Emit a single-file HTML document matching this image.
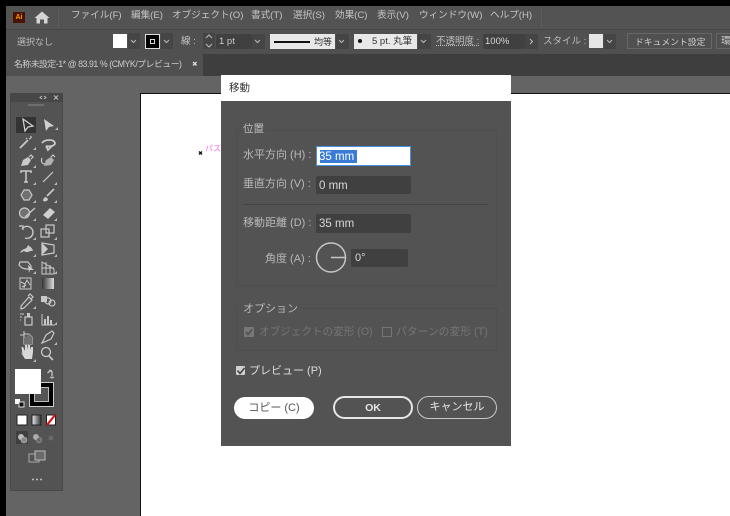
<!DOCTYPE html>
<html><head><meta charset="utf-8">
<style>
html,body{margin:0;padding:0}
body{width:730px;height:516px;overflow:hidden;background:#646464}
#w{position:relative;width:730px;height:516px;overflow:hidden;filter:blur(.35px);font-family:"Liberation Sans","Noto Sans CJK JP",sans-serif;color:#c8c8c8}
.a{position:absolute}
.t{position:absolute;white-space:nowrap;line-height:14px}
.m{font-size:9.6px;color:#c4c4c4;top:9px}
.fld{position:absolute;background:#404040;border-radius:2px;color:#d8d8d8;font-size:11.5px;line-height:21px;box-sizing:border-box;padding-left:3px}
.dd{position:absolute;background:#454545;width:13px;height:18px}
svg{position:absolute;left:0;top:0}
</style></head><body><div id="w">
<div class="a" style="left:0;top:0;width:730px;height:6px;background:#000"></div>
<div class="a" style="left:0;top:0;width:6px;height:516px;background:#000"></div>
<!-- menu bar -->
<div class="a" style="left:6px;top:6px;width:724px;height:23px;background:#535353"></div>
<div class="a" style="left:13px;top:12px;width:12px;height:11px;background:#4a1200;color:#ff9a00;font-size:7px;line-height:11px;text-align:center;font-weight:bold">Ai</div>
<div class="a" style="left:58px;top:8px;width:1px;height:19px;background:#5e5e5e"></div>
<div class="t m" style="left:71px">ファイル(F)</div>
<div class="t m" style="left:131px">編集(E)</div>
<div class="t m" style="left:172px">オブジェクト(O)</div>
<div class="t m" style="left:251px">書式(T)</div>
<div class="t m" style="left:293px">選択(S)</div>
<div class="t m" style="left:335px">効果(C)</div>
<div class="t m" style="left:377px">表示(V)</div>
<div class="t m" style="left:419px">ウィンドウ(W)</div>
<div class="t m" style="left:490px">ヘルプ(H)</div>
<div class="a" style="left:541px;top:8px;width:1px;height:19px;background:#5e5e5e"></div>
<!-- control bar -->
<div class="a" style="left:6px;top:29px;width:724px;height:25px;background:#505050;border-top:1px solid #474747;box-sizing:border-box"></div>
<div class="t" style="left:17px;top:35px;font-size:9px;color:#bdbdbd">選択なし</div>
<div class="a" style="left:113px;top:34px;width:14px;height:14px;background:#fff"></div>
<div class="dd" style="left:128px;top:33px;width:12px;height:16px"></div>
<div class="a" style="left:145px;top:34px;width:15px;height:15px;background:#000;border:1px solid #ddd;box-sizing:border-box"></div>
<div class="a" style="left:150px;top:39px;width:5px;height:5px;border:1px solid #ddd;box-sizing:border-box"></div>
<div class="dd" style="left:161px;top:33px;width:12px;height:16px"></div>
<div class="t" style="left:181px;top:35px;font-size:9.5px;color:#c4c4c4">線 :</div>
<div class="dd" style="left:203px;top:33px;width:12px;height:16px"></div>
<div class="fld" style="left:216px;top:34px;width:36px;height:15px;line-height:16px;font-size:9.5px;color:#ccc;padding-left:3px">1 pt</div>
<div class="dd" style="left:252px;top:34px;width:13px;height:15px"></div>
<div class="a" style="left:270px;top:34px;width:65px;height:15px;background:#e8e8e8"></div>
<div class="a" style="left:274px;top:41px;width:36px;height:2px;background:#111"></div>
<div class="t" style="left:314px;top:35px;font-size:9px;color:#333">均等</div>
<div class="dd" style="left:336px;top:34px;width:13px;height:15px"></div>
<div class="a" style="left:354px;top:34px;width:63px;height:15px;background:#e8e8e8"></div>
<div class="a" style="left:358px;top:39px;width:4px;height:4px;border-radius:50%;background:#111"></div>
<div class="t" style="left:372px;top:35px;font-size:9.5px;color:#333">5 pt. 丸筆</div>
<div class="dd" style="left:418px;top:34px;width:13px;height:15px"></div>
<div class="t" style="left:436px;top:35px;font-size:9.5px;color:#bdbdbd;text-decoration:underline dotted">不透明度 :</div>
<div class="fld" style="left:483px;top:34px;width:42px;height:15px;line-height:16px;font-size:9.5px;padding-left:2px">100%</div>
<div class="dd" style="left:525px;top:34px;width:13px;height:15px"></div>
<div class="t" style="left:543px;top:35px;font-size:9.5px;color:#bdbdbd">スタイル :</div>
<div class="a" style="left:589px;top:34px;width:14px;height:14px;background:#e6e6e6"></div>
<div class="dd" style="left:604px;top:34px;width:12px;height:15px"></div>
<div class="a" style="left:627px;top:33px;width:85px;height:16px;border:1px solid #666;box-sizing:border-box"></div>
<div class="t" style="left:635px;top:35px;font-size:8.8px;color:#cfcfcf">ドキュメント設定</div>
<div class="a" style="left:716px;top:33px;width:20px;height:16px;border:1px solid #666;box-sizing:border-box"></div>
<div class="t" style="left:721px;top:35px;font-size:9.5px;color:#cfcfcf">環</div>
<!-- tabs -->
<div class="a" style="left:6px;top:54px;width:724px;height:22px;background:#3e3e3e"></div>
<div class="a" style="left:6px;top:54px;width:197px;height:22px;background:#505050"></div>
<div class="t" style="left:14px;top:57px;font-size:8.8px;color:#cdcdcd;letter-spacing:-.45px">名称未設定-1* @ 83.91 % (CMYK/プレビュー)</div>
<!-- canvas -->
<div class="a" style="left:6px;top:76px;width:724px;height:440px;background:#646464"></div>
<div class="a" style="left:140px;top:93px;width:590px;height:423px;background:#fff;border-top:1px solid #111;border-left:1px solid #111;box-sizing:border-box"></div>
<div class="t" style="left:205px;top:142px;font-size:8px;color:#f26bf0">パス</div>
<!-- toolbox -->
<div class="a" style="left:10px;top:93px;width:53px;height:398px;background:#535353;border:1px solid #4a4a4a;box-sizing:border-box"></div>
<div class="a" style="left:10px;top:93px;width:53px;height:9px;background:#474747"></div>
<div class="a" style="left:28px;top:104px;width:16px;height:2px;background:#6e6e6e"></div>
<div class="a" style="left:16px;top:117px;width:20px;height:16px;background:#333"></div>
<svg width="730" height="516" viewBox="0 0 730 516" fill="none" stroke="#c9c9c9" stroke-width="1.2">
<!-- anchor -->
<path d="M199 151.500l3 3M202 151.500l-3 3" stroke="#111" stroke-width="1.400"/>
<!-- home -->
<path d="M34.500 18 L42 11.500 L49.500 18 H47.500 V23.500 H44 V19.500 H40 V23.500 H36.500 V18Z" fill="#d4d4d4" stroke="none"/>
<!-- chevrons -->
<g stroke="#bbb" stroke-width="1">
<path d="M131 40l2.500 2.500 2.500-2.500M164 40l2.500 2.500 2.500-2.500M255 40l2.500 2.500 2.500-2.500M339 40l2.500 2.500 2.500-2.500M421 40l2.500 2.500 2.500-2.500M607 40l2.500 2.500 2.500-2.500M530 39l2.500 2.500-2.500 2.500"/>
<path d="M206 38l3-3 3 3M206 44l3 3 3-3"/>
</g>
<!-- tab close -->
<path d="M193 62l3.500 3.500M196.500 62l-3.500 3.500" stroke="#ddd" stroke-width="1.400"/>
<!-- palette header -->
<path d="M42 96l-2 1.500 2 1.500M44 96l2 1.500-2 1.500M54 95.500l4 4M58 95.500l-4 4" stroke="#bbb" stroke-width="1"/>
<!-- row 1 -->
<path d="M23 119 L33 126 L28 127 L25 131Z" stroke="#d5d5d5"/>
<path d="M44 119 L54 126 L49 127 L46 131Z" fill="#d0d0d0" stroke="none"/>
<!-- row 2 magic/lasso -->
<path d="M20 148 L28 140" stroke-width="1.800"/><path d="M29 139l2-1M31 136v2M26 138l1 1" />
<path d="M42 143 c3-4 12-4 13 0 c0 3-6 4-9 3 M46 146 l2 4 l4 -4" stroke-width="1.800"/>
<!-- row 3 pen -->
<path d="M21 166 l2-6 5-3 3 3-3 5z" fill="#c9c9c9" stroke="none"/><path d="M29 157l2-2 2 2-2 2"/>
<path d="M44 166 l2-6 5-3 3 3-3 5z" fill="#b0b0b0" stroke="none"/><path d="M42 158c-1 2-1 6 3 6M51 157l2-2 2 2"/>
<!-- row 4 T / line -->
<path d="M21 173 V171 H31 V173 M26 171 V182 M24 182 H28" stroke-width="1.500"/>
<path d="M43 182 L53 172"/>
<!-- row 5 polygon/brush -->
<path d="M21 195 l3-5 h5 l3 5 -3 5 h-5z" fill="#707070"/>
<path d="M43 201 c0-3 2-4 3-4 l2 2 c0 2-3 3-5 2z" fill="#c9c9c9" stroke="none"/><path d="M47 196 L54 189" stroke-width="1.600"/>
<!-- row 6 blob / eraser -->
<circle cx="24.500" cy="213" r="5" fill="#707070"/><path d="M25 217 L35 208" stroke-width="1.400"/>
<path d="M43 215 l7-7 5 4-7 7z" fill="#d0d0d0" stroke="none"/>
<!-- row 7 rotate/scale -->
<path d="M22 229 a6 6 0 1 1 3 9" stroke-width="1.400"/><path d="M19 226l4 0 0 4" stroke-width="1.200"/>
<rect x="41" y="229" width="8" height="8"/><rect x="46" y="225" width="8" height="8"/>
<!-- row 8 -->
<path d="M20 253 c3-6 6-2 8-8 c2 2 4 2 5 6 c-4-1-5 3-9 0z" fill="#c9c9c9" stroke="none"/>
<path d="M42 243 l12 2 v8 l-12 2z" stroke-width="1.200"/><path d="M42 243 l6 6-6 6z" fill="#c9c9c9" stroke="none"/>
<!-- row 9 -->
<path d="M20 262 h8 l3 4 v3 h-5 l-4-1 -3-3z"/><path d="M28 265 l6 5 -4 0 -1 3z" fill="#c9c9c9" stroke="none"/>
<path d="M42 262 l12 7 v5 h-12z M46 262 v12 M50 265 v9 M42 268 h12" stroke-width="1"/>
<!-- row 10 -->
<rect x="20" y="278" width="11" height="11" stroke-width="1"/><path d="M21 282l4 2 2-4 3 5M25 284l-1 4M22 287l4-2" stroke-width="1"/>
<defs><linearGradient id="g"><stop offset="0" stop-color="#333"/><stop offset="1" stop-color="#ddd"/></linearGradient>
<linearGradient id="h"><stop offset="0" stop-color="#eee"/><stop offset="1" stop-color="#333"/></linearGradient></defs>
<rect x="42" y="278" width="12" height="11" fill="url(#g)" stroke="none"/>
<!-- row 11 -->
<path d="M21 306 l8-9 3 3-8 8-3 1z M28 296 l2-2 3 3-2 2" stroke-width="1.200"/>
<rect x="41" y="296" width="6" height="6" fill="#c9c9c9" stroke="none"/><circle cx="52" cy="303" r="3"/><circle cx="48" cy="301" r="3"/>
<!-- row 12 -->
<path d="M20 314h4M20 317h2M20 320h1" stroke-width="1"/><rect x="25" y="317" width="7" height="8"/><rect x="27" y="313" width="3" height="4" fill="#c9c9c9" stroke="none"/>
<path d="M42 314 v11 h13" stroke-width="1"/><path d="M45 319v6M48 316v9M51 320v5" stroke-width="2"/>
<!-- row 13 artboard / knife -->
<path d="M24 331v4h-4M24 334h5l3 3v7h-8z" stroke-width="1.100"/><path d="M29 334l3 3v7h-8v-6z" fill="#707070" stroke="none"/>
<path d="M42 343 l4-8 6-4 2 2-3 6z" stroke-width="1.200"/>
<!-- row 14 hand / zoom -->
<path d="M20 351 l5 8 h7 l1-7 v-5 l-2 0 -1 3 v-5 h-2 v5 l-1-5 h-2 v6 l-2-4 h-1.500 l1 7z" fill="#d8d8d8" stroke="none"/>
<circle cx="46" cy="352" r="4.500" stroke-width="1.300"/><path d="M49 356 l4 4" stroke-width="1.600"/>
<!-- swap -->
<path d="M49 370 l3 1.500 v5 M47.500 373 l4-3 M50 377 l2 1 2-1" stroke="#ccc" stroke-width="1.200"/>
<!-- small triangles -->
<g fill="#bbb" stroke="none">
<path d="M58 130h-3l3-3zM36 150h-3l3-3zM36 168h-3l3-3zM36 185h-3l3-3zM57 185h-3l3-3zM36 203h-3l3-3zM57 203h-3l3-3zM36 221h-3l3-3zM57 221h-3l3-3zM36 240h-3l3-3zM57 240h-3l3-3zM36 257h-3l3-3zM57 257h-3l3-3zM36 274h-3l3-3zM57 274h-3l3-3zM36 309h-3l3-3zM57 325h-3l3-3zM57 345h-3l3-3zM36 362h-3l3-3z"/>
</g>
<!-- swatches -->
<rect x="29.500" y="382.500" width="24" height="24" fill="#000" stroke="#ccc" stroke-width="1"/>
<rect x="34.500" y="387.500" width="14" height="14" fill="#555" stroke="#bbb" stroke-width="1"/>
<rect x="15" y="369" width="26" height="25" fill="#fff" stroke="none"/>
<rect x="15" y="399" width="5" height="5" fill="#fff" stroke="none"/><rect x="19" y="402" width="5" height="5" fill="#111" stroke="#ddd" stroke-width="1"/>
<rect x="17" y="415" width="10" height="10" fill="#fff" stroke="#222" stroke-width="1"/>
<rect x="32" y="415" width="9" height="10" fill="url(#h)" stroke="#222" stroke-width="1"/>
<rect x="46.500" y="415" width="9" height="10" fill="#fff" stroke="#222" stroke-width="1"/><path d="M47 425 L55 415" stroke="#e01010" stroke-width="2.200"/>
<rect x="16" y="431" width="12" height="13" fill="#3f3f3f" stroke="none"/>
<circle cx="21" cy="437" r="3" fill="#bbb" stroke="none"/><circle cx="24" cy="440" r="3" fill="#888" stroke="#bbb" stroke-width=".6"/>
<circle cx="36" cy="437" r="3" fill="#aaa" stroke="none"/><circle cx="39" cy="440" r="2.500" fill="#666" stroke="#aaa" stroke-width=".6"/>
<circle cx="51" cy="438" r="2.500" fill="#6a6a6a" stroke="none"/>
<rect x="29" y="454" width="10" height="8" stroke="#aaa" stroke-width="1" fill="#535353"/>
<rect x="35" y="451" width="10" height="9" stroke="#bbb" stroke-width="1" fill="#6a6a6a"/>
<path d="M32 479.500h2M36 479.500h2M40 479.500h2" stroke="#bdbdbd" stroke-width="1.500"/>
</svg>
<!-- dialog -->
<div class="a" style="left:221px;top:75px;width:290px;height:371px;background:#535353"></div>
<div class="a" style="left:221px;top:75px;width:290px;height:26px;background:#fff"></div>
<div class="t" style="left:229px;top:81px;font-size:10.5px;color:#333">移動</div>
<div class="a" style="left:236px;top:130px;width:261px;height:156px;border:1px solid #4e4e4e;box-sizing:border-box"></div>
<div class="t" style="left:241px;top:122px;font-size:10.5px;color:#bdbdbd;background:#535353;padding:0 2px">位置</div>
<div class="t" style="left:243px;top:148px;font-size:11px;color:#b8b8b8">水平方向 (H) :</div>
<div class="a" style="left:316px;top:146px;width:95px;height:20px;background:#fff;border:1px solid #4a90e2;box-sizing:border-box"></div>
<div class="a" style="left:320px;top:150px;width:37px;height:13px;background:#3a7bd5"></div>
<div class="t" style="left:319px;top:150px;font-size:11.5px;color:#fff;line-height:14px">35 mm</div>
<div class="t" style="left:243px;top:177px;font-size:11px;color:#b8b8b8">垂直方向 (V) :</div>
<div class="fld" style="left:316px;top:176px;width:95px;height:18px">0 mm</div>
<div class="a" style="left:243px;top:204px;width:245px;height:1px;background:#454545"></div>
<div class="t" style="left:243px;top:216px;font-size:11px;color:#b8b8b8">移動距離 (D) :</div>
<div class="fld" style="left:316px;top:214px;width:95px;height:19px">35 mm</div>
<div class="t" style="left:265px;top:252px;font-size:11px;color:#b8b8b8">角度 (A) :</div>
<svg width="730" height="516" viewBox="0 0 730 516" fill="none">
<circle cx="331" cy="257.500" r="14.500" stroke="#c6c6c6" stroke-width="1.500"/>
<path d="M331 257.500H345" stroke="#c6c6c6" stroke-width="1.500"/>
</svg>
<div class="fld" style="left:351px;top:249px;width:57px;height:18px;line-height:18px;font-size:11px;padding-left:4px">0°</div>
<div class="a" style="left:236px;top:308px;width:261px;height:43px;border:1px solid #4e4e4e;box-sizing:border-box"></div>
<div class="t" style="left:241px;top:302px;font-size:11px;color:#b8b8b8;background:#535353;padding:0 2px">オプション</div>
<div class="a" style="left:244px;top:327px;width:10px;height:10px;background:#777;border-radius:1px"></div>
<svg width="730" height="516" viewBox="0 0 730 516" fill="none">
<path d="M246 332l2 2.500 4-5" stroke="#4f4f4f" stroke-width="1.500"/>
</svg>
<div class="t" style="left:259px;top:325px;font-size:10.6px;color:#757575">オブジェクトの変形 (O)</div>
<div class="a" style="left:382px;top:327px;width:10px;height:10px;border:1px solid #757575;box-sizing:border-box"></div>
<div class="t" style="left:396px;top:325px;font-size:10.8px;color:#757575">パターンの変形 (T)</div>
<div class="a" style="left:236px;top:366px;width:9px;height:9px;background:#d0d0d0;border-radius:1px"></div>
<svg width="730" height="516" viewBox="0 0 730 516" fill="none"><path d="M237.500 370.500l2.500 3 4.500-5.500" stroke="#444" stroke-width="1.600"/></svg>
<div class="t" style="left:249px;top:364px;font-size:11px;color:#dcdcdc">プレビュー (P)</div>
<div class="a" style="left:234px;top:397px;width:80px;height:22px;background:#fff;border-radius:11px;text-align:center;font-size:11px;line-height:22px;color:#555">コピー (C)</div>
<div class="a" style="left:333px;top:396px;width:80px;height:23px;border:2px solid #e6e6e6;border-radius:12px;box-sizing:border-box;text-align:center;font-size:10.5px;line-height:20px;color:#e6e6e6;font-weight:bold">OK</div>
<div class="a" style="left:417px;top:396px;width:80px;height:23px;border:1.500px solid #c8c8c8;border-radius:12px;box-sizing:border-box;text-align:center;font-size:11px;line-height:20px;color:#e6e6e6">キャンセル</div>
</div></body></html>
